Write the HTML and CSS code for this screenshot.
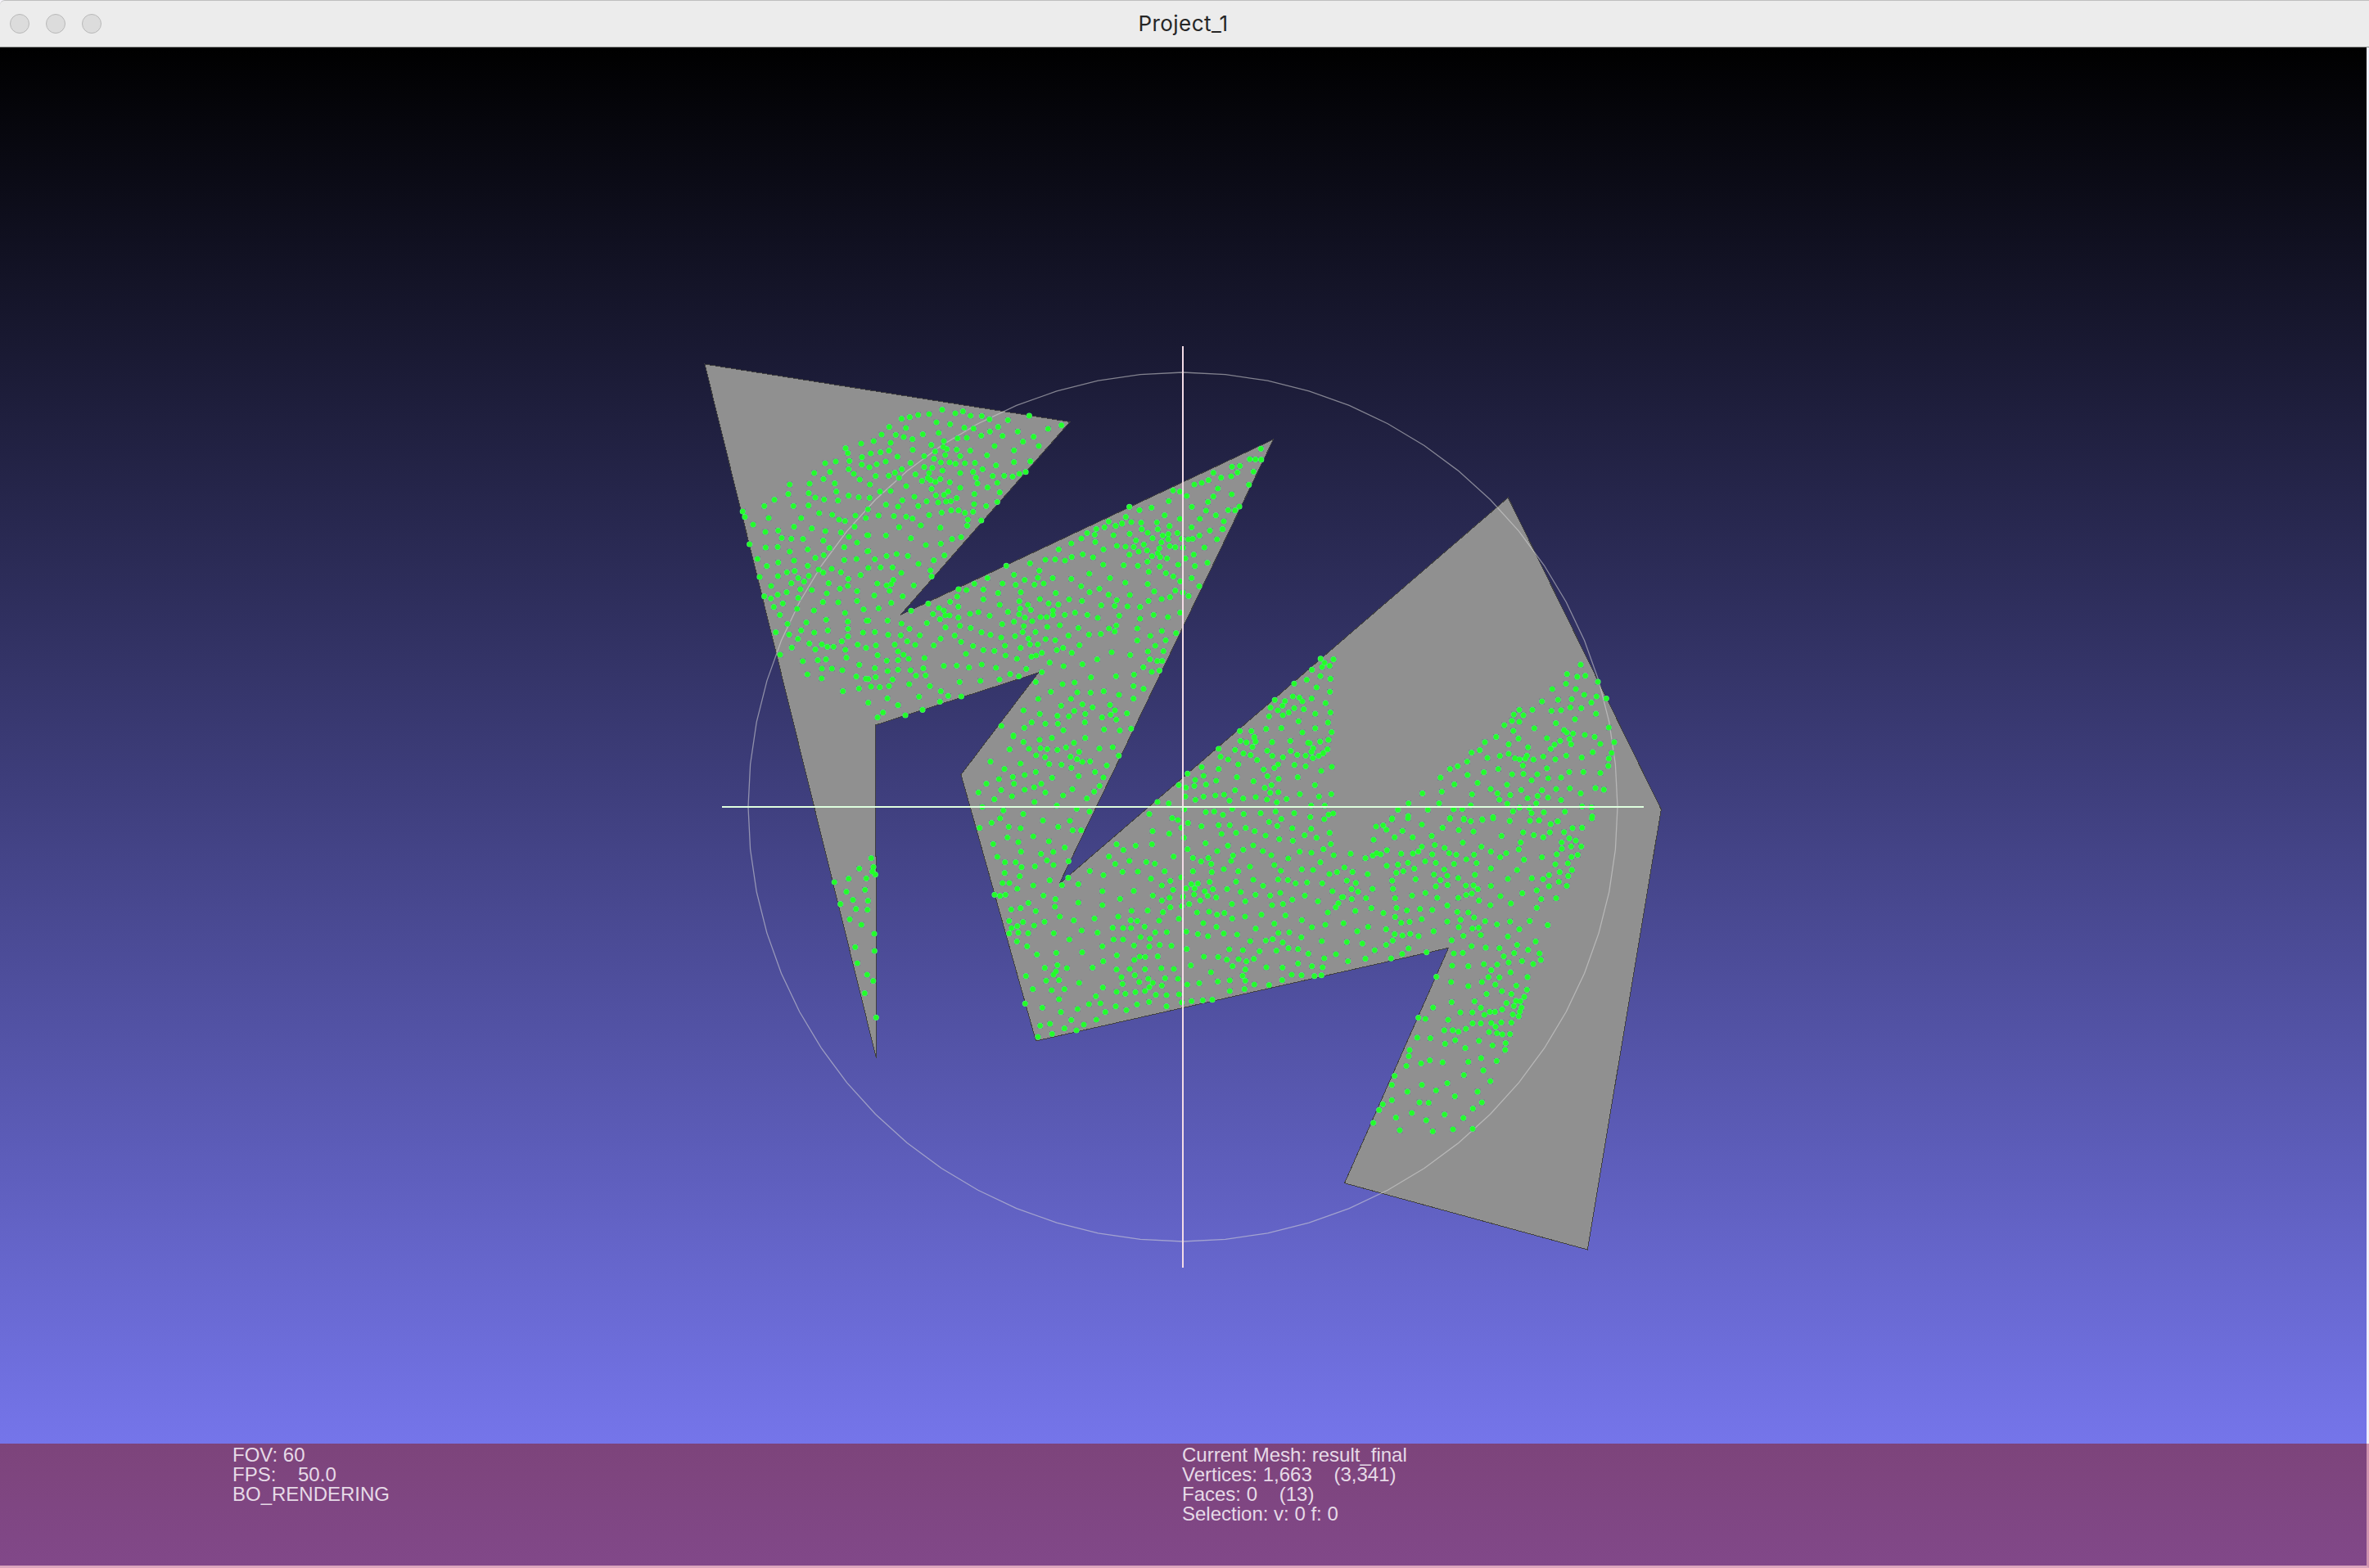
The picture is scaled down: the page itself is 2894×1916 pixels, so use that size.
FILE: index.html
```html
<!DOCTYPE html>
<html lang="en">
<head>
<meta charset="utf-8">
<title>Project_1</title>
<link rel="stylesheet" href="styles.css">
</head>
<body>
<div class="window">
  <header class="titlebar">
    <div class="controls"><span class="control"></span><span class="control"></span><span class="control"></span></div>
    <h1 class="title">Project_1</h1>
  </header>
  <main class="viewport">
    <svg class="scene" viewBox="0 58 2891 1706" width="2891" height="1706">
      <polygon class="mesh" points="861,445 1307,515.5 1100,751.5 1555.5,537 1294,1080 1842.3,608 2029.3,989 1939.3,1527 1642.5,1445.7 1769.5,1158.3 1265.5,1272 1174,946.5 1268.5,822 1069.5,886 1069.5,1046 1070.5,1046 1070.5,1293"/>
      <polygon class="trackball" id="trackball"/>
      <path class="vertex-corner" id="corners"/>
      <path class="vertex-rim" id="rims"/>
      <path class="vertex" id="vertices"/>
      <rect class="axis-y" x="1444" y="423" width="2" height="1126"/>
      <rect class="axis-x" x="882" y="985" width="1126" height="2"/>
    </svg>
  </main>
  <footer class="status">
    <div class="column">
      <p>FOV: 60</p>
      <p>FPS:    50.0</p>
      <p>BO_RENDERING</p>
    </div>
    <div class="column">
      <p>Current Mesh: result_final</p>
      <p>Vertices: 1,663    (3,341)</p>
      <p>Faces: 0    (13)</p>
      <p>Selection: v: 0 f: 0</p>
    </div>
  </footer>
</div>
<script src="scene.js"></script>
</body>
</html>
```
FILE: styles.css
```css
* { box-sizing: border-box; }
body { margin: 0; background: #f4f2f8; overflow: hidden; }
.window {
  display: grid;
  grid-template-rows: 58px 1706px 152px;
  width: 2894px;
  height: 1916px;
}
.titlebar {
  display: grid;
  grid-template-columns: 1fr auto 1fr;
  align-items: center;
  padding-right: 3px;
  background: #ececec;
  border-top: 1px solid #bebebe;
  border-bottom: 1px solid #8c8e8c;
  border-top-left-radius: 6px;
}
.controls { display: flex; gap: 20px; padding-left: 12px; }
.control { width: 24px; height: 24px; border: 1px solid #b9b9b9; border-radius: 50%; background: #dcdcdc; }
.title {
  margin: 0;
  font: 400 26px/32px Inter, sans-serif;
  letter-spacing: .45px;
  color: #262626;
}
.viewport {
  border-right: 3px solid #efeffb;
  background: linear-gradient(#000, #7575ea);
}
.scene { display: block; }
.mesh { fill: #909090; stroke: #404040; stroke-width: 1; shape-rendering: crispEdges; }
.trackball { fill: none; stroke: rgba(215, 215, 215, .55); stroke-width: 1.3; }
.vertex-corner { fill: none; stroke: rgba(30, 45, 110, .4); stroke-width: 6.6; stroke-linecap: square; }
.vertex-rim { fill: none; stroke: #50f078; stroke-width: 7.2; stroke-linecap: round; }
.vertex { fill: none; stroke: #22ff26; stroke-width: 5.8; stroke-linecap: round; }
.axis-x { fill: #dfffdf; }
.axis-y { fill: #f3dce6; }
.status {
  display: grid;
  grid-template-columns: 1160px 1fr;
  padding: 2px 0 0 284px;
  border-right: 3px solid #cf94b0;
  border-bottom: 3px solid #dca6bd;
  background: linear-gradient(#7d447b, #814889);
  font: 24px/24px "Liberation Sans", Arial, sans-serif;
  color: #e6dae7;
}
.column p { margin: 0; white-space: pre; }
```
FILE: scene.js
```js
// Sampled vertices, stored per tile: origin, units per pixel on each axis, then x,y pairs.
const tiles = [
  { x: 850, y: 430, ux: 3, uy: 3, pts: `903 212 951 225 979 218 1007 234 1048 235 1076 247 1144 250 1222 234 1340 269 1291 282 754 245 784 239 815 231 855 228 882 258 932 265 984 278 1018 281 1108 275 1078 292 1046 307 1124 308 1180 292 1238 311 1199 329 1257 345 709 275 770 279 681 303 733 304 762 312 794 320 832 302 890 297 909 327 959 317 993 315 863 341 907 348 920 356 877 365 956 358 1006 362 1095 345 1166 361 606 336 652 327 714 333 549 353 557 371 641 372 677 368 708 362 795 359 837 382 914 378 969 382 1067 379 609 386 739 384 873 392 563 400 513 402 474 408 608 413 636 423 663 412 696 402 787 407 837 422 867 425 898 405 930 405 952 410 986 408 1023 407 1100 416 1166 404 1226 401 434 444 492 440 560 430 579 447 601 468 659 455 707 454 730 443 755 430 745 462 805 449 855 444 904 435 969 444 1016 440 1051 430 1209 440 1186 447 1161 457 1130 454 1088 455 1027 461 1032 482 1105 480 1069 497 850 462 860 470 829 473 878 477 896 466 931 478 969 498 638 486 771 492 864 502 925 512 468 466 417 483 509 482 344 486 339 521 414 518 438 534 470 541 515 512 521 545 560 527 597 533 637 535 675 512 714 510 288 542 251 565 358 565 413 563 172 585 180 605 267 609 386 609 452 591 500 597 525 615 547 620 585 600 623 609 631 577 697 560 741 567 757 544 801 531 815 565 846 548 880 526 910 524 888 552 917 549 935 547 956 536 1021 521 1114 515 1105 550 1064 565 1020 558 1016 586 986 590 963 581 936 581 901 589 855 598 771 604 794 611 726 602 670 600 997 615 995 637 1046 618 824 636 745 642 896 645 210 633 255 660 302 655 360 641 425 647 475 657 532 662 582 641 561 678 315 682 350 685 393 686 467 692 591 699 197 705 256 717 300 715 344 732 410 724 490 719 544 716 226 759 260 785 302 772 360 765 438 755 469 745 410 784 544 763 589 759 628 672 629 731 234 825 301 822 334 808 362 803 375 829 397 842 414 821 450 798 467 809 498 795 532 808 559 832 604 818 632 792 276 858 350 848 383 870 425 873 487 848 480 885 528 868 557 858 591 877 251 896 275 904 300 890 333 881 319 922 375 902 286 935 308 964 371 942 433 948 466 917 522 918 591 913 547 957 615 944 336 997 405 992 478 982 557 989 626 985 293 1028 342 1036 386 1021 374 1052 434 1029 484 1021 557 1015 558 1043 613 1029 309 1110 352 1084 416 1069 438 1091 462 1072 482 1081 505 1081 535 1061 548 1092 552 1121 593 1073 624 1085 392 1134 447 1130 477 1127 599 1147 409 1182 462 1161 461 1197 499 1161 537 1167 588 1190 623 1198 539 1244 598 1234` },
  { x: 1060, y: 640, ux: 3, uy: 3, pts: `115 13 195 6 266 14 364 7 67 43 158 53 2 42 213 78 268 73 309 56 342 49 2 100 26 130 69 118 106 111 147 118 186 147 242 134 281 116 2 162 47 160 91 160 123 180 230 171 234 193 35 219 69 226 86 221 94 206 80 246 169 226 24 263 128 266 86 290 40 310 159 319 222 293 73 355 2 355 124 366 153 385 217 364 239 331 261 309 279 318 284 336 300 336 265 350 302 286 333 240 328 267 332 304 362 243 391 220 439 199 424 241 424 277 332 344 375 330 406 324 447 337 338 374 377 382 285 380 26 397 75 407 121 409 191 409 319 410 267 421 99 443 145 431 174 444 242 446 30 446 111 468 131 480 150 495 111 500 36 482 70 502 208 492 360 477 342 433 386 448 417 398 450 407 424 463 464 466 26 529 73 540 111 535 157 537 204 530 177 557 212 556 91 571 29 562 2 569 152 588 228 595 12 597 44 599 78 595 279 521 326 520 371 527 418 516 337 580 413 576 470 528 483 571 522 551 554 559 581 532 72 640 188 634 268 614 295 631 343 633 265 652 111 665 2 656 56 692 36 710 138 702 201 682 508 154 595 145 536 187 575 206 542 224 494 219 478 254 484 297 514 323 493 368 489 417 503 447 505 483 547 495 540 412 536 359 561 251 556 284 559 311 555 332 576 344 572 375 568 397 587 297 598 316 603 357 589 421 595 442 560 455 600 487 617 483 623 442 638 473 615 397 652 423 658 378 633 342 656 342 631 276 611 223 623 198 629 172 645 219 663 292 699 296 689 254 678 199 651 132 687 131 723 135 748 122 700 94 746 72 783 54 804 34 832 40 838 19 868 13 834 67 788 112 826 123 746 202 782 229 738 277 679 318 679 334 722 334 704 372 760 326 785 283 813 251 849 238 812 183 863 150 864 94 901 42 909 8 932 0 960 37 913 81 945 84 975 85 983 61 1004 20 1026 33 1012 76 993 102 959 113 938 152 990 154 1024 98 1044 53 1063 20 1081 43 1102 38 1106 9 1101 57 1076 68 1107 82 1127 86 1069 90 1063 108 1072 122 1042 119 1025 139 1070 157 1097 127 1030 176 1093 181 1135 34 1151 55 1175 57 1191 55 1216 43 1187 13 1254 25 1300 20 1280 57 1234 87 1156 88 1195 113 1164 127 1138 150 1199 155 1245 143 1120 193 1145 211 1187 199 1215 229 1026 221 1050 248 1127 245 1155 252 1176 265 1108 269 1077 276 1029 283 998 305 952 303 961 261 944 216 888 199 883 260 913 280 905 301 856 299 805 334 843 345 922 337 998 348 1048 334 1100 342 1145 326 772 382 736 410 687 427 716 455 693 463 748 473 776 445 811 406 854 404 884 384 911 373 905 395 988 384 988 428 1078 393 1036 411 1092 427 1130 401 1054 447 1084 467 1027 468 1034 497 1061 503 1079 503 1069 538 1041 543 1010 526 976 553 962 481 894 471 841 497 787 515 718 522 667 509 638 544 616 580 818 563 910 559 714 588 758 582 671 616 768 618 817 619 865 614 921 627 974 595 1011 605 974 641 745 642 787 662 824 673 888 664 906 684 890 700 859 710 911 718 950 695 709 667 757 686 797 697 737 706 695 704 631 697 571 684 625 642 601 728 651 733 697 733 574 748 490 741 534 776 717 757 796 728 866 754 924 758 965 751` },
  { x: 1310, y: 520, ux: 3, uy: 3, pts: `691 85 650 123 671 124 692 125 664 169 647 217 614 148 585 151 605 172 582 186 545 191 517 173 499 200 474 210 447 216 533 231 517 260 584 252 497 280 490 312 526 329 571 310 596 311 612 297 555 351 551 380 369 238 394 242 419 258 353 277 438 298 338 329 394 342 467 342 310 355 209 298 246 310 290 301 196 335 216 354 252 356 182 358 133 352 158 367 356 368 813 946 859 932 742 1006 779 1010 808 993 832 997 843 1011 770 1027 726 1034 753 1044 793 1052 771 1062 813 1036 848 1040 721 1066 829 1084 766 1109 710 1112 656 1120 614 1120 843 1125 799 1156 667 1141 671 1159 732 1161 638 1162 616 1156 864 1163` },
  { x: 1180, y: 900, ux: 3, uy: 3, pts: `174 0 211 20 270 12 315 5 437 5 160 47 231 45 273 43 298 46 335 49 367 40 396 23 415 56 489 44 538 39 560 70 257 69 290 76 383 74 407 83 427 93 455 91 516 106 90 92 141 119 200 99 305 101 350 103 386 115 473 130 121 156 172 148 215 141 256 130 316 151 413 145 504 150 75 173 176 173 250 186 276 173 490 181 46 205 129 196 215 195 291 205 390 193 356 216 470 202 443 227 169 219 104 230 251 240 333 253 60 258 137 271 125 300 94 316 210 284 282 308 406 265 453 275 381 309 338 331 391 344 422 344 50 335 157 331 200 336 152 370 192 387 247 366 304 384 362 407 100 394 202 422 275 430 320 423 115 441 143 461 182 461 204 479 253 476 297 454 321 471 376 457 142 500 197 512 307 527 375 518 454 493 134 537 159 537 188 558 247 546 352 545 412 541 105 580 125 584 145 580 284 583 229 610 328 596 326 624 412 609 166 634 200 629 256 640 344 660 395 674 471 667 158 676 209 680 288 679 188 695 167 702 250 693 158 722 192 719 228 721 322 721 424 711 482 719 187 751 379 744 224 769 260 799 331 793 426 791 335 838 289 848 370 849 330 861 321 873 464 847 220 878 294 895 341 893 415 903 245 926 314 930 361 926 341 963 217 979 280 994 348 1010 409 999 451 981 476 952 493 978 511 1010 386 1039 308 1053 272 1060 432 1056 478 1038 361 1070 405 1077 316 1090 264 1101 500 567 504 508 524 440 552 395 577 416 622 400 547 467 599 456 574 496 630 495 661 460 692 466 682 395 684 347 745 356 672 284 702 240 743 245 756 299 777 306 780 178 789 334 800 267 799 371 761 440 728 494 678 521 615 566 565 595 500 618 558 660 607 639 666 638 604 674 628 676 538 701 576 702 605 702 655 697 541 744 576 744 500 769 503 824 553 802 616 766 640 735 674 741 672 770 694 718 736 717 708 675 722 644 749 626 718 601 746 591 685 583 718 546 749 529 759 562 789 516 796 587 791 622 780 668 710 764 753 767 703 806 657 808 637 807 617 819 552 854 600 852 656 853 716 849 762 852 619 875 570 882 574 907 635 900 668 888 685 903 672 919 718 913 730 886 777 888 502 920 552 936 584 943 621 937 656 933 696 947 735 948 781 945 791 975 549 989 588 1003 627 982 671 973 735 989 827 970 868 967 903 965 811 909 855 904 898 864 824 839 809 779 808 715 850 724 887 732 870 684 847 645 891 642 920 653 947 647 818 614 859 601 886 584 875 567 905 560 917 590 826 541 850 539 838 557 836 579 806 557 832 494 893 533 901 497 899 467 888 445 862 458 832 445 812 413 878 391 863 329 814 317 921 420 960 400 945 486 979 436 972 456 1016 415 998 494 990 532 957 559 1007 570 1053 525 1041 477 1053 399 1058 347 1025 335 990 353 967 325 926 325 937 357 879 277 910 275 942 287 976 265 1018 284 966 235 946 213 914 216 871 220 841 232 804 220 806 187 837 181 880 176 840 159 871 144 812 136 864 112 917 162 926 119 998 102 961 84 933 74 926 45 986 49 1017 62 1006 16 1028 21 1062 18 1057 4 1050 38 1043 68 1067 86 1104 52 1122 20 1123 71 1162 76 1189 16 1190 53 1214 67 1255 24 1298 19 1328 12 1273 43 1266 56 1245 70 1272 79 1293 71 1309 62 1325 47 1341 111 1302 126 1245 109 1204 104 1144 102 1130 115 1091 121 1105 145 1146 155 1054 164 993 149 986 197 1016 227 1062 222 1095 188 1120 178 1115 206 1145 204 1103 231 1139 241 1175 229 1216 149 1224 211 1279 178 1294 220 1339 211 1315 253 1265 253 1346 282 1329 286 1313 303 1262 295 1203 281 1135 275 1156 302 1111 313 1080 281 1141 328 1098 363 1148 376 1196 336 1198 382 1241 362 1265 338 1285 371 1333 353 1337 394 1310 413 1266 426 1223 422 1181 447 1119 435 1088 420 1130 471 1154 492 1144 524 1089 547 1180 526 1208 538 1250 535 1306 538 1272 489 1231 487 1299 461 1348 435 1332 504 1360 497 1343 567 1378 589 1365 611 1355 626 1326 645 1290 604 1242 583 1196 598 1152 573 1115 583 1162 614 1122 618 1061 580 1024 604 975 614 976 667 1023 660 1083 653 1130 686 1171 656 1231 673 1268 699 1317 690 1304 750 1229 736 1185 718 1145 720 1161 755 1124 743 1099 748 1062 704 1042 750 994 726 945 722 918 698 872 807 924 808 965 780 956 818 977 842 999 816 1028 824 1055 815 1015 783 1076 787 1138 785 1182 776 1217 779 1255 796 1313 813 1356 798 1268 842 1307 846 1217 832 1160 847 1101 846 1024 854 1014 877 1024 895 967 894 923 898 967 933 1021 926 1057 909 1111 911 1159 893 1194 873 1230 875 1277 878 1303 875` },
  { x: 1600, y: 580, ux: 3, uy: 2.45, pts: `40 551 87 553 54 563 45 576 73 572 8 584 39 603 76 611 25 637 7 670 74 650 58 684 20 716 76 712 67 742 20 759 80 771 38 799 69 794 13 819 65 822 50 833 33 842 11 848 7 830 0 804 993 569 943 597 980 605 1010 602 1056 620 939 626 975 642 889 642 1006 659 1051 664 1087 670 1032 682 960 672 910 674 851 679 955 697 995 699 921 705 886 707 816 704 768 704 748 718 783 720 741 737 768 740 713 750 1049 716 972 732 902 744 823 759 746 767 683 785 765 790 932 765 942 772 965 775 1008 779 1044 785 1096 757 1065 806 1116 801 952 791 958 807 918 797 897 808 869 789 883 821 800 816 729 807 642 801 623 825 593 832 577 859 542 873 514 881 479 907 697 842 729 836 651 848 752 849 769 852 790 850 796 841 820 853 856 844 900 852 940 841 997 847 1037 831 1106 833 1096 850 1094 872 1065 893 1003 890 951 890 869 879 921 907 874 909 834 897 813 915 783 896 781 871 742 897 691 881 638 891 578 899 615 923 723 928 663 941 688 954 695 973 735 959 724 985 775 944 798 969 835 962 851 945 830 984 873 967 903 941 921 974 953 939 993 954 1047 938 1078 943 998 993 1033 996 1035 1023 935 1009 858 1011 813 1013 805 998 769 997 745 1008 733 1037 807 1036 841 1035 909 1038 883 1046 530 927 484 949 413 954 362 984 474 984 595 957 590 990 323 1003 433 1003 527 1002 559 1001 361 1022 302 1029 514 1028 565 1030 590 1037 632 1032 672 1025` },
  { x: 1640, y: 1000, ux: 3, uy: 2.8, pts: `181 3 123 28 149 24 161 39 220 43 291 21 240 0 394 2 445 4 470 10 513 5 552 0 613 9 687 8 720 7 763 19 788 10 914 0 878 32 843 33 812 47 760 48 736 65 701 57 662 48 583 60 480 45 426 40 367 32 327 60 257 65 191 65 114 73 30 121 84 136 111 127 125 119 140 123 163 109 215 121 258 120 278 113 291 97 338 91 374 101 391 119 417 124 441 83 509 97 544 114 578 133 600 119 646 106 653 82 665 141 731 133 785 123 804 104 803 82 831 68 855 76 838 96 875 96 862 125 839 132 826 154 780 157 796 184 841 177 827 197 793 217 822 231 757 194 735 208 694 205 757 232 712 246 728 276 783 273 712 306 686 351 752 365 659 256 617 291 579 266 542 297 544 231 606 207 640 177 544 171 482 124 491 153 454 140 409 156 329 123 342 152 303 147 240 152 203 158 162 162 263 172 223 181 197 186 182 213 92 191 37 183 7 168 16 213 49 221 33 242 57 251 110 241 34 276 86 273 47 317 2 269 106 307 150 324 185 241 193 273 198 306 193 337 236 315 255 264 268 208 304 255 347 272 342 233 335 192 373 175 384 196 359 211 385 228 424 204 485 193 452 230 480 229 496 242 474 257 453 262 424 272 500 281 384 298 329 313 284 310 290 345 246 354 215 357 384 353 421 320 461 322 482 339 433 347 426 372 476 377 499 374 523 352 566 363 614 353 648 379 606 404 507 399 443 402 334 386 279 403 248 395 220 401 191 396 184 418 160 379 160 433 94 371 54 386 4 359 16 423 73 428 118 451 20 489 84 480 178 479 219 464 242 445 308 458 400 417 408 462 441 460 473 437 525 442 575 444 640 433 680 450 708 421 722 462 727 484 699 498 658 488 629 461 591 472 609 493 567 500 545 519 518 499 461 506 402 504 344 542 398 560 461 574 511 560 535 543 575 544 560 569 616 527 678 543 637 572 676 586 584 591 528 601 619 601 666 611 636 625 652 626 628 642 656 647 601 632 650 661 646 677 624 671 585 654 484 626 507 648 540 662 559 662 520 672 476 664 432 664 400 629 332 647 278 682 304 686 387 689 477 701 507 701 545 700 561 713 582 698 619 699 537 731 566 735 586 739 614 738 598 769 596 792 550 777 500 761 565 830 508 820 516 862 542 899 461 833 450 786 413 759 376 771 373 725 404 725 425 730 452 720 322 752 274 750 246 793 243 814 234 847 288 838 320 828 367 835 445 878 384 906 343 931 291 912 191 881 181 912 238 935 181 964 148 978 134 998 113 1042 196 1024 254 1008 282 972 316 973 412 951 495 935 511 972 478 993 443 1025 374 1013 307 1033 210 1067 331 1071 405 1064 477 1062` },
  { x: 990, y: 1020, ux: 3, uy: 3, pts: `223 86 231 118 227 135 238 146 179 124 140 161 205 160 88 174 132 209 200 202 156 239 211 242 110 254 167 272 209 275 144 310 187 330 234 363 164 412 235 426 172 471 208 513 230 536 199 581 241 670` }
];

let d = "";
for (const t of tiles) {
  const n = t.pts.split(" ").map(Number);
  for (let i = 0; i < n.length; i += 2) {
    d += `M${(t.x + n[i] / t.ux).toFixed(1)} ${(t.y + n[i + 1] / t.uy).toFixed(1)}h.01`;
  }
}
for (const id of ["corners", "rims", "vertices"]) {
  document.getElementById(id).setAttribute("d", d);
}

// The trackball outline is a 64-sided polygon.
const ring = [];
for (let i = 0; i < 64; i++) {
  const a = i * Math.PI / 32;
  ring.push(`${(1445 + 531 * Math.cos(a)).toFixed(1)},${(986 + 531 * Math.sin(a)).toFixed(1)}`);
}
document.getElementById("trackball").setAttribute("points", ring.join(" "));
```
